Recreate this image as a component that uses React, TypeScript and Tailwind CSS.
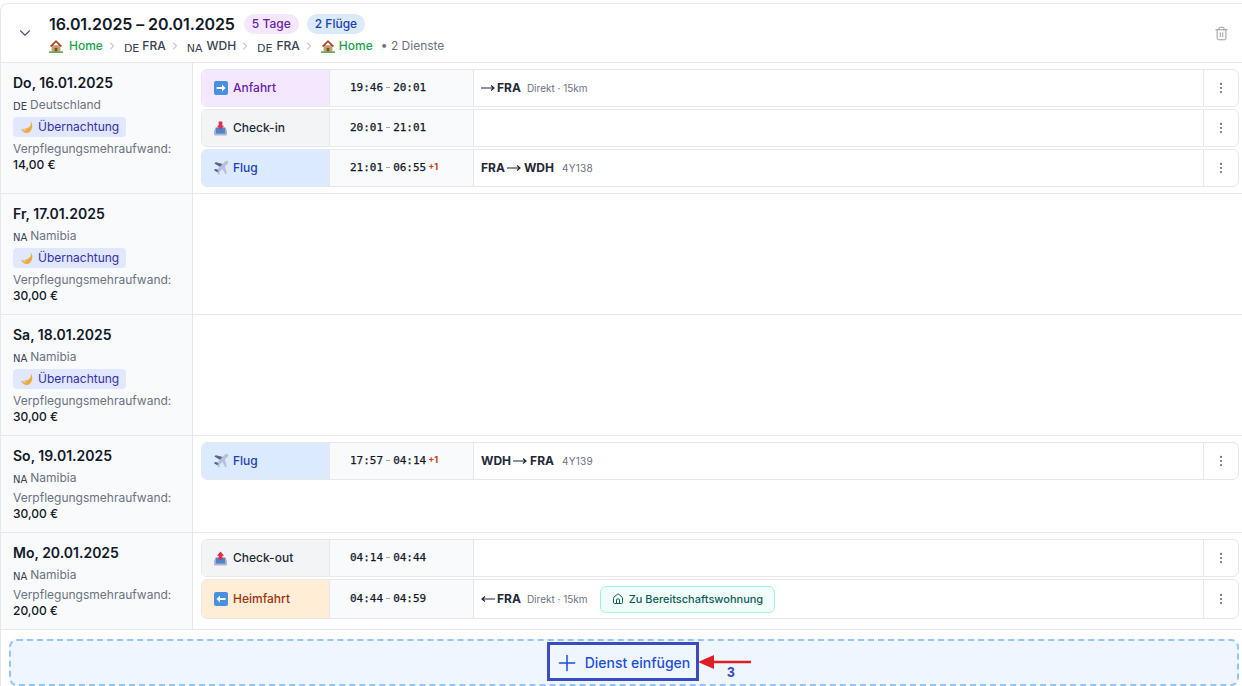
import { ChevronDown, ChevronRight, Trash2, MoreVertical, Plus, House } from "lucide-react";
import type { ReactNode } from "react";

const Flag = ({ c, side, tight }: { c: string; side?: boolean; tight?: boolean }) => (
  <span className={`leading-none text-[#374151] font-normal relative top-[2px] font-['DejaVu_Sans',sans-serif] ${side ? "text-[10px] mr-[3px]" : tight ? "text-[11px] mr-[3px]" : "text-[11px] mr-[4px]"}`}>{c}</span>
);

const HomeE = () => (
  <svg width="14" height="14" viewBox="0 0 16 16" className="shrink-0">
    <rect x="3" y="7" width="10" height="8" fill="#c9a27a" />
    <path d="M8 1 L1 8 L3 9 L8 4 L13 9 L15 8 Z" fill="#b5482c" />
    <rect x="6.5" y="10" width="3" height="5" fill="#7a4a2a" />
    <rect x="0" y="14" width="16" height="2" fill="#6fae50" />
  </svg>
);

const BoxArrow = ({ left }: { left?: boolean }) => (
  <svg width="14" height="14" viewBox="0 0 14 14" className="shrink-0">
    <rect width="14" height="14" rx="2" fill="#4a90e2" />
    <path d={left ? "M11.5 6h-5.5V3.500L2.500 7 6 10.500V8h5.500z" : "M2.500 6h5.500V3.500L11.500 7 8 10.500V8H2.500z"} fill="#fff" />
  </svg>
);

const Tray = ({ up }: { up?: boolean }) => (
  <svg width="13" height="16" viewBox="0 0 14 16" className="shrink-0">
    <path d="M2 7h10l2 4v4a1 1 0 0 1-1 1H1a1 1 0 0 1-1-1v-4z" fill="#b4b4d2" />
    <rect x="2" y="8" width="10" height="6" fill="#4a86c8" />
    <path d={up ? "M7 1 L11 5.500 H9 V10 H5 V5.500 H3 Z" : "M5 1 H9 V5.500 H11 L7 10 L3 5.500 H5 Z"} fill="#d9304f" />
  </svg>
);

const Plane = () => (
  <svg width="16" height="16" viewBox="0 0 16 16" className="shrink-0">
    <path d="M14.800 1.200c-.8-.8-2-.4-2.800.4L9.500 4.100 2.800 2.200 1.500 3.500l5.400 3.200-2.700 2.800-2-.4L1 10.300l3 1.700 1.700 3 1.200-1.200-.4-2 2.800-2.700 3.200 5.400 1.300-1.300-1.900-6.700 2.500-2.500c.8-.8 1.200-2 .4-2.800z" fill="#b9bfd9" />
    <path d="M9.500 4.100 2.800 2.200 1.500 3.500l5.400 3.200z" fill="#56658e" />
    <path d="M1 10.300l1.200-1.200 2 .4L5.700 11 4 12z" fill="#56658e" />
  </svg>
);

const Moon = () => (
  <svg width="14" height="14" viewBox="0 0 14 14" className="shrink-0">
    <path d="M10.500 1c1.800 4-1.200 8.500-9.500 8 1.500 3 4.500 4.500 7 3.800C12 11.700 14 5 10.500 1z" fill="#f0a93f" />
    <path d="M1 9c2 .4 4 .4 5.600-.2C6 11.500 3.500 12 1 9z" fill="#dcc7a4" />
  </svg>
);

const Arrow = ({ left, cls }: { left?: boolean; cls?: string }) => (
  <svg width="14" height="8" viewBox="0 0 14 8" className={`shrink-0 ${cls ?? ""}`}>
    <path d={left ? "M1 4H14M4 1.500 1 4l3 2.500" : "M0 4H13M10 1.500 13 4l-3 2.500"} fill="none" stroke="#1f2937" strokeWidth="1.200" />
  </svg>
);

type Svc = {
  label: string;
  icon: ReactNode;
  bg: string;
  text: string;
  from: string;
  to: string;
  plus?: boolean;
  tall?: boolean;
  detail?: ReactNode;
};

const Meta = ({ children }: { children: ReactNode }) => (
  <span className="text-[10px] font-normal text-[#6b7280] ml-[6px] relative top-[0.5px]">{children}</span>
);

const Sep = () => <span className="w-[4px] h-px bg-[#9ca3af] mx-[3px] relative -top-[1px]" />;

const Service = ({ s }: { s: Svc }) => (
  <div className={`flex rounded-md border border-[#e5e7eb] bg-white overflow-hidden ${s.tall ? "h-[40px]" : "h-[38px]"}`}>
    <div className={`w-[128px] shrink-0 flex items-center pl-[11px] gap-[5px] text-[12px] font-medium border-r border-[#e5e7eb] ${s.bg} ${s.text}`}>
      <span className="w-[15px] flex justify-center">{s.icon}</span>
      <span>{s.label}</span>
    </div>
    <div className="w-[144px] shrink-0 flex items-center pl-[20px] bg-[#f9fafb] border-r border-[#e5e7eb] text-[11px] text-[#111827] font-['DejaVu_Sans_Mono',monospace] [-webkit-text-stroke:0.25px_#111827]">
      <span>{s.from}</span>
      <Sep />
      <span>{s.to}</span>
      {s.plus && <span className="text-[9px] text-[#c2410c] font-bold font-['Inter',sans-serif] ml-[2px] relative -top-[1px] [-webkit-text-stroke:0]">+1</span>}
    </div>
    <div className="flex-1 flex items-center pl-[7px] text-[12px] font-bold text-[#1f2937]">{s.detail}</div>
    <div className="w-[35px] shrink-0 flex items-center justify-center border-l border-[#e5e7eb] text-[#6b7280]">
      <MoreVertical size={14} strokeWidth={1.75} className="-mt-[1px]" />
    </div>
  </div>
);

const Day = ({ date, flag, country, night, amount, services, h }: { date: string; flag: string; country: string; night?: boolean; amount: string; services: Svc[]; h: string }) => (
  <div className={`flex border-b border-[#e5e7eb] ${h}`}>
    <div className="w-[192px] shrink-0 border-r border-[#e5e7eb] bg-[#f9fafb] pl-[12px] pt-[11px]">
      <div className="text-[14px] leading-[18px] font-semibold text-[#111827]">{date}</div>
      <div className="mt-[4px] h-[18px] flex items-center text-[12px] text-[#6b7280]"><Flag c={flag} side />{country}</div>
      {night && (
        <div className="mt-[3px] h-[20px] w-[113px] flex items-center gap-[4px] pl-[7px] rounded bg-[#e0e7ff] text-[12px] text-[#3730a3]">
          <Moon />
          <span>Übernachtung</span>
        </div>
      )}
      <div className={`${night ? "mt-[4px]" : "mt-[3px]"} text-[12px] leading-[16px] text-[#6b7280]`}>Verpflegungsmehraufwand:</div>
      <div className="text-[12px] leading-[16px] font-medium text-[#111827]">{amount}</div>
    </div>
    <div className="flex-1 pl-[8px] pr-[3px] pt-[6px] flex flex-col gap-[2px] min-w-0">
      {services.map((s, i) => <Service key={i} s={s} />)}
    </div>
  </div>
);

const code = "ml-[8px] text-[10px] font-normal text-[#6b7280] tracking-wide";

const anfahrt: Svc = { label: "Anfahrt", icon: <BoxArrow />, bg: "bg-[#f3e8ff]", text: "text-[#6b21a8]", from: "19:46", to: "20:01", detail: <><Arrow cls="mr-[2px]" />FRA<Meta>Direkt · 15km</Meta></> };
const checkin: Svc = { label: "Check-in", icon: <Tray />, bg: "bg-[#f3f4f6]", text: "text-[#1f2937]", from: "20:01", to: "21:01" };
const flug1: Svc = { label: "Flug", icon: <Plane />, bg: "bg-[#dbeafe]", text: "text-[#1e40af]", from: "21:01", to: "06:55", plus: true, detail: <>FRA<Arrow cls="mx-[2px]" /><span className="ml-[1px]">WDH</span><span className={code}>4Y138</span></> };
const flug2: Svc = { label: "Flug", icon: <Plane />, bg: "bg-[#dbeafe]", text: "text-[#1e40af]", from: "17:57", to: "04:14", plus: true, detail: <>WDH<Arrow cls="mx-[2px]" /><span className="ml-[1px]">FRA</span><span className={code}>4Y139</span></> };
const checkout: Svc = { label: "Check-out", icon: <Tray up />, bg: "bg-[#f3f4f6]", text: "text-[#1f2937]", from: "04:14", to: "04:44" };
const heimfahrt: Svc = {
  label: "Heimfahrt", tall: true, icon: <BoxArrow left />, bg: "bg-[#ffedd5]", text: "text-[#9a3412]", from: "04:44", to: "04:59",
  detail: <>
    <Arrow left cls="mr-[2px]" />FRA<Meta>Direkt · 15km</Meta>
    <span className="ml-[12px] h-[27px] flex items-center gap-[5px] px-[11px] rounded-md border border-[#99f6e4] bg-[#f0fdfa] text-[11px] font-medium text-[#115e59]">
      <House size={12} />Zu Bereitschaftswohnung
    </span>
  </>,
};

const Crumb = () => <ChevronRight size={12} className="text-[#9ca3af] ml-[3px] mr-[6px]" />;

export default function App() {
  return (
    <div className="h-[686px] w-[1242px] overflow-hidden bg-white font-['Inter',sans-serif] pt-[3px]">
      <div className="w-[1242px] border-t border-l border-[#e5e7eb] rounded-tl-lg bg-white">
        <div className="h-[59px] flex items-start border-b border-[#e5e7eb] relative">
          <ChevronDown size={18} strokeWidth={1.5} className="text-[#4b5563] ml-[15px] mt-[20px]" />
          <div className="ml-[15px] pt-[10px]">
            <div className="flex items-center h-[20px]">
              <span className="text-[16px] font-semibold tracking-[-0.09px] text-[#111827]">16.01.2025 – 20.01.2025</span>
              <span className="ml-[9px] h-[20px] flex items-center px-[8px] rounded-full bg-[#f3e8ff] text-[12px] font-medium text-[#6b21a8]">5 Tage</span>
              <span className="ml-[8px] h-[20px] flex items-center px-[8px] rounded-full bg-[#dbeafe] text-[12px] font-medium text-[#1e40af]">2 Flüge</span>
            </div>
            <div className="flex items-center mt-[3px] h-[18px] text-[12px] text-[#374151] font-medium">
              <HomeE /><span className="ml-[6px] text-[#16a34a]">Home</span><Crumb />
              <Flag c="DE" tight /><span>FRA</span><Crumb />
              <Flag c="NA" /><span>WDH</span><Crumb />
              <Flag c="DE" /><span>FRA</span><Crumb />
              <HomeE /><span className="ml-[4px] text-[#16a34a]">Home</span>
              <span className="ml-[8px] font-normal text-[#6b7280]">• 2 Dienste</span>
            </div>
          </div>
          <Trash2 size={15} strokeWidth={1.5} className="absolute right-[13px] top-[22px] text-[#8f96a3]" />
        </div>
        <Day h="h-[131px]" date="Do, 16.01.2025" flag="DE" country="Deutschland" night amount="14,00 €" services={[anfahrt, checkin, flug1]} />
        <Day h="h-[121px]" date="Fr, 17.01.2025" flag="NA" country="Namibia" night amount="30,00 €" services={[]} />
        <Day h="h-[121px]" date="Sa, 18.01.2025" flag="NA" country="Namibia" night amount="30,00 €" services={[]} />
        <Day h="h-[97px]" date="So, 19.01.2025" flag="NA" country="Namibia" amount="30,00 €" services={[flug2]} />
        <Day h="h-[97px]" date="Mo, 20.01.2025" flag="NA" country="Namibia" amount="20,00 €" services={[checkout, heimfahrt]} />
        <div className="pt-[9px] pl-[8px] pr-[3px]">
          <div className="relative h-[47px] rounded-lg border-2 border-dashed border-[#93c5fd] bg-[#eff6ff] flex items-center justify-center text-[14px] font-medium text-[#1d4ed8]">
            <Plus size={26} strokeWidth={1.4} className="-ml-[4px] mr-[5px]" />
            <span>Dienst einfügen</span>
            <div className="absolute left-[536px] top-[1px] w-[152px] h-[39px] border-[3px] border-[#3b4bc0]" />
            <svg width="53" height="14" viewBox="0 0 53 14" className="absolute left-[687px] top-[14px]">
              <path d="M53 7H12" stroke="#e01e26" strokeWidth="2.500" />
              <path d="M0 7 L16 0 V14 Z" fill="#e01e26" />
            </svg>
            <span className="absolute left-[716px] top-[23px] text-[14px] leading-[16px] font-bold text-[#3b4bc0] font-['Liberation_Sans',sans-serif]">3</span>
          </div>
        </div>
      </div>
    </div>
  );
}
